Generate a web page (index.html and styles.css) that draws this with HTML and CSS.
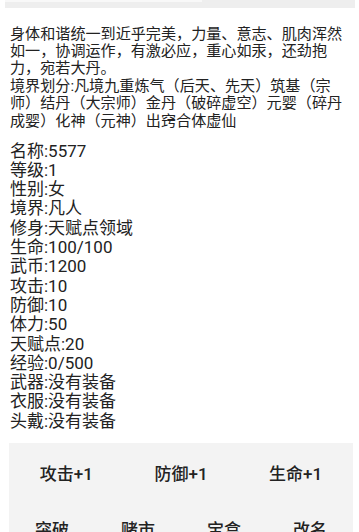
FILE: index.html
```html
<!DOCTYPE html>
<html lang="zh">
<head>
<meta charset="utf-8">
<link rel="stylesheet" href="styles.css">
</head>
<body>
<div class="topbar"><div class="topbar-inner"></div></div>
<p class="desc">身体和谐统一到近乎完美，力量、意志、肌肉浑然如一，协调运作，有激必应，重心如汞，还劲抱力，宛若大丹。<br>境界划分:凡境九重炼气（后天、先天）筑基（宗师）结丹（大宗师）金丹（破碎虚空）元婴（碎丹成婴）化神（元神）出窍合体虚仙</p>
<div class="stats">
<div>名称:5577</div>
<div>等级:1</div>
<div>性别:女</div>
<div>境界:凡人</div>
<div>修身:天赋点领域</div>
<div>生命:100/100</div>
<div>武币:1200</div>
<div>攻击:10</div>
<div>防御:10</div>
<div>体力:50</div>
<div>天赋点:20</div>
<div>经验:0/500</div>
<div>武器:没有装备</div>
<div>衣服:没有装备</div>
<div>头戴:没有装备</div>
</div>
<div class="panel">
<div class="row row3">
<div class="btn">攻击+1</div>
<div class="btn">防御+1</div>
<div class="btn">生命+1</div>
</div>
<div class="row row4">
<div class="btn">突破</div>
<div class="btn">赌市</div>
<div class="btn">宝盒</div>
<div class="btn">改名</div>
</div>
</div>
</body>
</html>
```
FILE: styles.css
```css
html, body {
  margin: 0;
  padding: 0;
  background: #ffffff;
}
body {
  font-family: Roboto, "Noto Sans CJK SC", sans-serif;
  color: #222222;
  width: 359px;
  height: 532px;
  overflow: hidden;
}
.topbar {
  margin: 0 4px 0 5px;
  height: 8px;
  background: #eeeeee;
}
.topbar-inner {
  width: 197px;
  height: 2px;
  background: #f8f8f8;
}
.desc {
  margin: 17.5px 0 0 0;
  padding: 0 9px 0 10px;
  font-size: 15.1px;
  line-height: 17.4px;
}
.stats {
  margin-top: 11.6px;
  padding-left: 10px;
  font-size: 17px;
  line-height: 19.3px;
}
.panel {
  margin: 11.7px 6px 0 9px;
  padding-top: 2px;
  background: #f3f3f3;
}
.row {
  display: grid;
  height: 56px;
  align-items: center;
}
.row3 {
  grid-template-columns: repeat(3, 1fr);
}
.row4 {
  grid-template-columns: repeat(4, 1fr);
}
.btn {
  text-align: center;
  font-size: 17px;
  font-weight: 500;
  color: #222222;
}
```
